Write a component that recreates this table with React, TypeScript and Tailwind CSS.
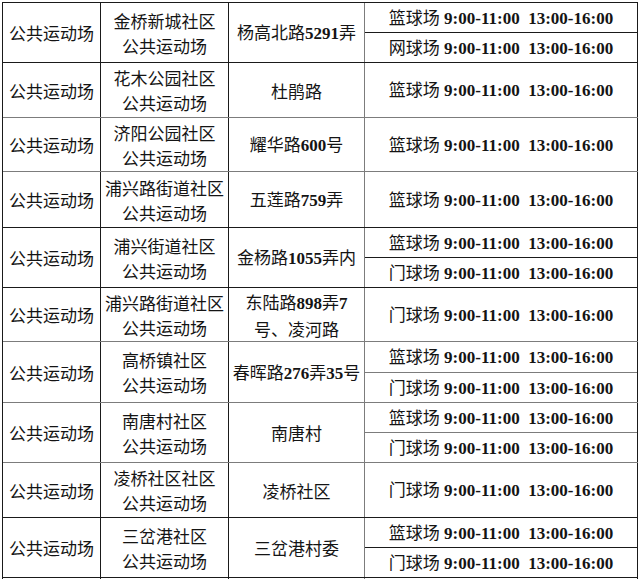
import React from "react";

type Sub = { label: string };
type Row = {
  h: string;
  bc: string;
  name: string[];
  addr: string[];
  subs: string[];
  subH?: string;
  subBc?: string;
};

const B = "border-[#1a1a1a]";
const G = "border-[#7c7c7c]";

const rows: Row[] = [
  { h: "h-[60px]", bc: B, name: ["金桥新城社区", "公共运动场"], addr: ["杨高北路5291弄"], subs: ["篮球场", "网球场"], subH: "h-[30px]", subBc: B },
  { h: "h-[55px]", bc: G, name: ["花木公园社区", "公共运动场"], addr: ["杜鹃路"], subs: ["篮球场"] },
  { h: "h-[54px]", bc: G, name: ["济阳公园社区", "公共运动场"], addr: ["耀华路600号"], subs: ["篮球场"] },
  { h: "h-[56px]", bc: B, name: ["浦兴路街道社区", "公共运动场"], addr: ["五莲路759弄"], subs: ["篮球场"] },
  { h: "h-[60px]", bc: B, name: ["浦兴街道社区", "公共运动场"], addr: ["金杨路1055弄内"], subs: ["篮球场", "门球场"], subH: "h-[30px]", subBc: B },
  { h: "h-[54px]", bc: G, name: ["浦兴路街道社区", "公共运动场"], addr: ["东陆路898弄7", "号、凌河路"], subs: ["门球场"] },
  { h: "h-[61px]", bc: G, name: ["高桥镇社区", "公共运动场"], addr: ["春晖路276弄35号"], subs: ["篮球场", "门球场"], subH: "h-[31px]", subBc: G },
  { h: "h-[60px]", bc: G, name: ["南唐村社区", "公共运动场"], addr: ["南唐村"], subs: ["篮球场", "门球场"], subH: "h-[30px]", subBc: G },
  { h: "h-[55px]", bc: B, name: ["凌桥社区社区", "公共运动场"], addr: ["凌桥社区"], subs: ["门球场"] },
  { h: "h-[60px]", bc: B, name: ["三岔港社区", "公共运动场"], addr: ["三岔港村委"], subs: ["篮球场", "门球场"], subH: "h-[30px]", subBc: B },
];

function Mixed({ text }: { text: string }) {
  const parts = text.split(/([0-9:\-\s]+)/).filter((p) => p.length > 0);
  return (
    <>
      {parts.map((p, i) =>
        /^[0-9:\-\s]+$/.test(p) ? (
          <span key={i} className="font-bold font-['Liberation_Serif','Times_New_Roman',serif]">
            {p}
          </span>
        ) : (
          <span key={i}>{p}</span>
        )
      )}
    </>
  );
}

function Time({ label }: { label: string }) {
  return (
    <span className="whitespace-pre">
      <Mixed text={`${label} 9:00-11:00  13:00-16:00`} />
    </span>
  );
}

export default function App() {
  return (
    <div className="w-[640px] h-[579px] overflow-hidden bg-white pl-[2px] pt-[2px] text-[#141414] text-[17px] font-['Noto_Sans_CJK_SC',sans-serif]">
      <div className={`w-[636px] border-l border-t ${B}`}>
        {rows.map((r, idx) => (
          <div key={idx} className={`flex ${r.h} border-b ${r.bc}`}>
            <div className={`w-[98px] shrink-0 border-r ${B} flex items-center justify-center leading-[25px]`}>
              公共运动场
            </div>
            <div className={`w-[128px] shrink-0 border-r ${B} flex flex-col items-center justify-center leading-[25px] text-center`}>
              {r.name.map((n, i) => (
                <div key={i}>{n}</div>
              ))}
            </div>
            <div className={`w-[136px] shrink-0 border-r ${G} flex flex-col items-center justify-center leading-[25px] text-center whitespace-nowrap`}>
              {r.addr.map((a, i) => (
                <div key={i}>
                  <Mixed text={a} />
                </div>
              ))}
            </div>
            <div className={`w-[273px] shrink-0 border-r ${B} flex flex-col`}>
              {r.subs.length === 2 ? (
                <>
                  <div className={`${r.subH} border-b ${r.subBc} flex items-center justify-center`}>
                    <Time label={r.subs[0]} />
                  </div>
                  <div className="flex-1 flex items-center justify-center">
                    <Time label={r.subs[1]} />
                  </div>
                </>
              ) : (
                <div className="flex-1 flex items-center justify-center">
                  <Time label={r.subs[0]} />
                </div>
              )}
            </div>
          </div>
        ))}
        <div className="flex h-[30px]">
          <div className={`w-[98px] shrink-0 border-r ${B}`} />
          <div className={`w-[128px] shrink-0 border-r ${B}`} />
          <div className={`w-[136px] shrink-0 border-r ${G}`} />
          <div className={`w-[273px] shrink-0 border-r ${B}`} />
        </div>
      </div>
    </div>
  );
}
